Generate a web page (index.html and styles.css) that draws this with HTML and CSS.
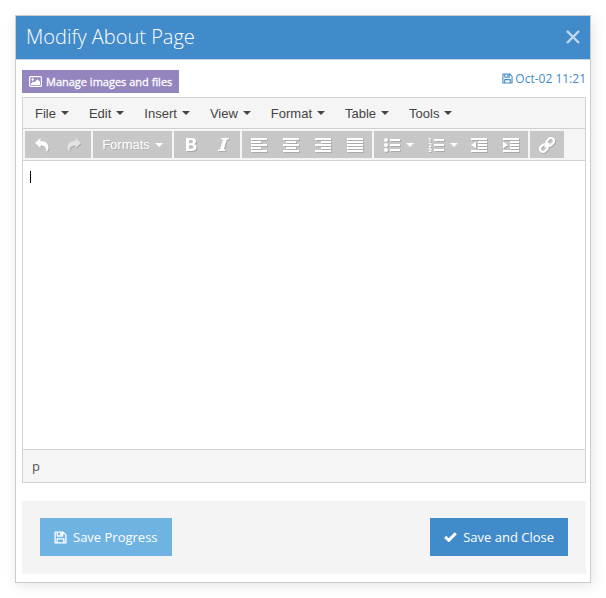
FILE: index.html
```html
<!DOCTYPE html>
<html lang="en">
<head>
<meta charset="utf-8">
<title>Modify About Page</title>
<link rel="stylesheet" href="styles.css">
</head>
<body>
<svg class="sprite" aria-hidden="true">
  <symbol id="floppy" viewBox="0 0 14 14"><path fill="none" stroke="currentColor" stroke-width="1.4" stroke-linejoin="round" d="M1.2 1.2h8.6l3 3v8.6H1.2zM3.4 12.6V8.4h7.2v4.2M3.6 1.4v4h5.6v-4"/><path fill="currentColor" d="M6.6 2h1.8v2.6H6.6z"/></symbol>
  <symbol id="bars-left" viewBox="0 0 16 14"><path d="M0 0h16v2H0zM0 3h10v2H0zM0 6h16v2H0zM0 9h10v2H0zM0 12h16v2H0z"/></symbol>
  <symbol id="bars-center" viewBox="0 0 16 14"><path d="M0 0h16v2H0zM3 3h10v2H3zM0 6h16v2H0zM3 9h10v2H3zM0 12h16v2H0z"/></symbol>
  <symbol id="bars-right" viewBox="0 0 16 14"><path d="M0 0h16v2H0zM6 3h10v2H6zM0 6h16v2H0zM6 9h10v2H6zM0 12h16v2H0z"/></symbol>
  <symbol id="bars-full" viewBox="0 0 16 14"><path d="M0 0h16v2H0zM0 3h16v2H0zM0 6h16v2H0zM0 9h16v2H0zM0 12h16v2H0z"/></symbol>
</svg>
<main class="modal">
  <header class="modal-header">
    <h1>Modify About Page</h1>
    <button class="close" type="button" aria-label="Close"><svg width="14" height="14" viewBox="0 0 14 14"><path d="M1 1l12 12M13 1L1 13" fill="none" stroke="currentColor" stroke-width="2.4"/></svg></button>
  </header>
  <div class="modal-body">
    <div class="top-row">
      <button class="manage" type="button">
        <svg width="13" height="11" viewBox="0 0 13 11"><rect x=".6" y=".6" width="11.8" height="9.8" rx="1" fill="none" stroke="currentColor" stroke-width="1.2"/><circle cx="3.7" cy="3.5" r="1.2" fill="currentColor"/><path fill="currentColor" d="M2 9V7.4l2-2 1.2 1.2L8.500 3.200 11 5.700V9z"/></svg>
        Manage images and files
      </button>
      <a class="saved" href="#history"><svg width="11" height="11"><use href="#floppy"/></svg>Oct-02 11:21</a>
    </div>
    <section class="editor">
      <nav class="menubar">
        <button type="button">File<i class="caret"></i></button>
        <button type="button">Edit<i class="caret"></i></button>
        <button type="button">Insert<i class="caret"></i></button>
        <button type="button">View<i class="caret"></i></button>
        <button type="button">Format<i class="caret"></i></button>
        <button type="button">Table<i class="caret"></i></button>
        <button type="button">Tools<i class="caret"></i></button>
      </nav>
      <div class="toolbar">
        <div class="group">
          <button type="button" aria-label="Undo"><svg width="14" height="14" viewBox="0 0 14 14"><path d="M0 5L5.500 0v3C10.500 3 13.500 5.500 13.500 9.500c0 2-1 3.500-2.500 4.500 1-3.500-.5-6.500-5.500-6.500V10z"/></svg></button>
          <button type="button" aria-label="Redo" disabled><svg width="14" height="14" viewBox="0 0 14 14"><path d="M14 5L8.500 0v3C3.500 3 .5 5.500 .5 9.500c0 2 1 3.500 2.500 4.500-1-3.500 .5-6.500 5.500-6.500V10z"/></svg></button>
        </div>
        <div class="group">
          <button class="formats" type="button">Formats<i class="caret"></i></button>
        </div>
        <div class="group">
          <button type="button" aria-label="Bold"><svg width="12" height="13" viewBox="0 0 12 13"><path fill-rule="evenodd" d="M1 0h5.500C9.500 0 11 1.200 11 3.200c0 1.400-.8 2.400-2 2.900 1.600.4 2.500 1.500 2.500 3.100C11.500 11.700 9.700 13 6.700 13H1zM4.200 2.200v3h1.700C7.200 5.200 7.900 4.700 7.900 3.700S7.200 2.200 5.900 2.200zM4.200 7.400v3.400h2c1.400 0 2.200-.6 2.200-1.700s-.8-1.700-2.200-1.700z"/></svg></button>
          <button type="button" aria-label="Italic"><svg width="12" height="13" viewBox="0 0 12 13"><path d="M4.500 0H12l-.4 1.500H9.800L6.800 11.500h1.800L8.200 13H.8l.4-1.500H3L6 1.500H4.100z"/></svg></button>
        </div>
        <div class="group">
          <button type="button" aria-label="Align left"><svg width="16" height="14"><use href="#bars-left"/></svg></button>
          <button type="button" aria-label="Align center"><svg width="16" height="14"><use href="#bars-center"/></svg></button>
          <button type="button" aria-label="Align right"><svg width="16" height="14"><use href="#bars-right"/></svg></button>
          <button type="button" aria-label="Justify"><svg width="16" height="14"><use href="#bars-full"/></svg></button>
        </div>
        <div class="group">
          <button class="split" type="button" aria-label="Bullet list"><svg width="16" height="14" viewBox="0 0 16 14"><circle cx="2" cy="2" r="2"/><circle cx="2" cy="7" r="2"/><circle cx="2" cy="12" r="2"/><path d="M6 1h10v2H6zM6 6h10v2H6zM6 11h10v2H6z"/></svg><i class="caret"></i></button>
          <button class="split" type="button" aria-label="Numbered list"><svg width="16" height="14" viewBox="0 0 16 14"><path d="M6 1h10v2H6zM6 6h10v2H6zM6 11h10v2H6z"/><path d="M.5.600H2V4M.5 5.500H3V7L1 8.500H3.500M.5 10.200H3V13.400H.5M1 11.800H3" fill="none" stroke="currentColor"/></svg><i class="caret"></i></button>
          <button type="button" aria-label="Decrease indent"><svg width="16" height="14" viewBox="0 0 16 14"><path d="M0 0h16v2H0zM7 3h9v2H7zM7 6h9v2H7zM7 9h9v2H7zM0 12h16v2H0zM5 3.500v7L0 7z"/></svg></button>
          <button type="button" aria-label="Increase indent"><svg width="16" height="14" viewBox="0 0 16 14"><path d="M0 0h16v2H0zM7 3h9v2H7zM7 6h9v2H7zM7 9h9v2H7zM0 12h16v2H0zM0 3.500v7L5 7z"/></svg></button>
        </div>
        <div class="group">
          <button type="button" aria-label="Insert link"><svg width="16" height="16" viewBox="0 0 16 16"><g transform="rotate(-45 8 8)" fill="none" stroke="currentColor" stroke-width="2.2"><rect x="-.5" y="5" width="8" height="6" rx="3"/><rect x="8.500" y="5" width="8" height="6" rx="3"/><path d="M5 8h6"/></g></svg></button>
        </div>
      </div>
      <div class="canvas">
        <textarea aria-label="Page content"></textarea>
        <span class="cursor"></span>
      </div>
      <div class="statusbar">p</div>
    </section>
    <footer class="actions">
      <button class="btn progress" type="button"><svg width="13" height="13"><use href="#floppy"/></svg>Save Progress</button>
      <button class="btn finish" type="button"><svg width="13" height="10" viewBox="0 0 13 10"><path d="M1.200 4.800l3.600 3.500L11.800 1.300" fill="none" stroke="currentColor" stroke-width="3"/></svg>Save and Close</button>
    </footer>
  </div>
</main>
</body>
</html>
```
FILE: styles.css
```css
* { box-sizing: border-box; }
body {
  margin: 0;
  padding: 15px;
  background: #fff;
  font-family: "Open Sans", sans-serif;
}
button {
  border: 0;
  margin: 0;
  padding: 0;
  background: none;
  color: inherit;
  font: inherit;
  white-space: nowrap;
}
.sprite { position: absolute; width: 0; height: 0; }
.modal {
  border: 1px solid #ccc;
  background: #fff;
  box-shadow: 2px 3px 12px rgba(0, 0, 0, .1);
}
.modal-header {
  display: flex;
  align-items: center;
  justify-content: space-between;
  height: 44px;
  padding: 0 10px;
  border-bottom: 1px solid #c4d8e8;
  background: #428bca;
  color: #fff;
}
h1 {
  margin: 0;
  font-size: 20px;
  font-weight: 300;
  line-height: 26px;
  padding-bottom: 2px;
}
.close { display: flex; padding-bottom: 2px; color: #c3daee; }
.modal-body { padding: 10px 4px 8px 6px; }
.top-row {
  display: flex;
  justify-content: space-between;
  margin-bottom: 4px;
}
.manage {
  display: flex;
  align-items: center;
  gap: 4px;
  height: 23px;
  padding: 0 7px;
  background: #9585bf;
  color: #fff;
  font-size: 11px;
  -webkit-text-stroke: .3px #fff;
}
.saved {
  display: flex;
  align-items: center;
  gap: 2px;
  height: 17px;
  color: #428bca;
  font-size: 12px;
  text-decoration: none;
}
.editor { border: 1px solid #d4d4d4; }
.menubar, .toolbar, .statusbar { background: #f5f5f5; }
.menubar {
  display: flex;
  height: 31px;
  padding: 0 2px;
  border-bottom: 1px solid #d0d0d0;
  color: #444;
  font-family: "Liberation Sans", sans-serif;
  font-size: 13px;
}
.menubar button {
  display: flex;
  align-items: center;
  gap: 5px;
  padding: 0 10px;
}
.caret {
  border: 4px solid transparent;
  border-top-color: currentColor;
  border-bottom: 0;
}
.toolbar {
  display: flex;
  gap: 2px;
  padding: 2px;
  border-bottom: 1px solid #d4d4d4;
}
.group {
  display: flex;
  height: 27px;
  padding: 0 1px;
  background: #c7c7c7;
  color: #fff;
}
.group button {
  display: flex;
  align-items: center;
  justify-content: center;
  width: 32px;
}
.group svg { fill: currentColor; filter: drop-shadow(1px 1px 0 #aaa); }
.group button:disabled { color: #e2e2e2; }
.group .formats {
  gap: 5px;
  width: 77px;
  font-family: "Liberation Sans", sans-serif;
  font-size: 13px;
  text-shadow: 1px 1px 0 #b4b4b4;
}
.group .split { gap: 6px; width: 44px; padding-left: 3px; }
.canvas { position: relative; display: flex; height: 288px; }
textarea {
  flex: 1;
  padding: 8px;
  border: 0;
  outline: 0;
  resize: none;
  font: 13px "Liberation Sans", sans-serif;
}
.cursor {
  position: absolute;
  top: 10px;
  left: 7px;
  width: 1px;
  height: 12px;
  background: #000;
}
.statusbar {
  height: 33px;
  padding: 0 9px;
  border-top: 1px solid #d4d4d4;
  color: #555;
  font-size: 13px;
  line-height: 32px;
}
.actions {
  display: flex;
  justify-content: space-between;
  margin-top: 18px;
  padding: 17px 18px 18px;
  background: #f4f4f4;
}
.btn {
  display: flex;
  align-items: center;
  gap: 6px;
  height: 38px;
  padding: 0 14px;
  color: #fff;
  font-size: 13px;
}
.progress { background: #6fb3e3; }
.finish { background: #428bca; }
```
